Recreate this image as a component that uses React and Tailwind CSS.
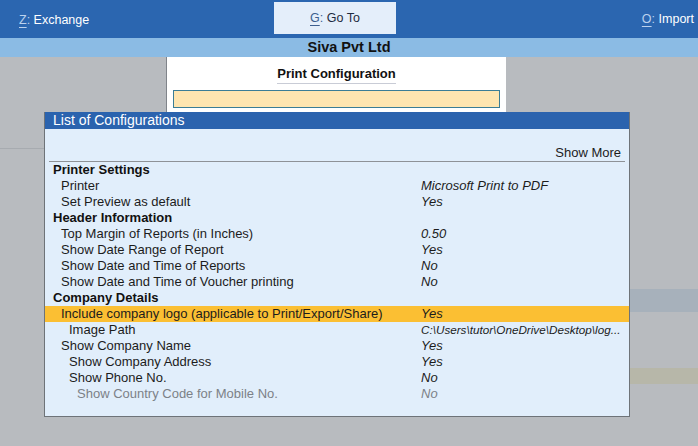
import React from "react";

const rows = [
  { label: "Printer Settings", kind: "head" },
  { label: "Printer", level: 1, value: "Microsoft Print to PDF" },
  { label: "Set Preview as default", level: 1, value: "Yes" },
  { label: "Header Information", kind: "head" },
  { label: "Top Margin of Reports (in Inches)", level: 1, value: "0.50" },
  { label: "Show Date Range of Report", level: 1, value: "Yes" },
  { label: "Show Date and Time of Reports", level: 1, value: "No" },
  { label: "Show Date and Time of Voucher printing", level: 1, value: "No" },
  { label: "Company Details", kind: "head" },
  { label: "Include company logo (applicable to Print/Export/Share)", level: 1, value: "Yes", active: true },
  { label: "Image Path", level: 2, value: "C:\\Users\\tutor\\OneDrive\\Desktop\\log...", small: true },
  { label: "Show Company Name", level: 1, value: "Yes" },
  { label: "Show Company Address", level: 2, value: "Yes" },
  { label: "Show Phone No.", level: 2, value: "No" },
  { label: "Show Country Code for Mobile No.", level: 3, value: "No", muted: true },
];

const indent = { 1: "pl-[16px]", 2: "pl-[24px]", 3: "pl-[32px]" };

const TopKey = ({ k, label, light }) => (
  <span className={`text-[12.5px] ${light ? "text-[#1d2b40]" : "text-white"}`}>
    <span className={`underline underline-offset-[3px] ${light ? "text-[#3d5f8f]" : "text-[#bcd2ee]"}`}>{k}</span>
    <span className={light ? "text-[#3d5f8f]" : "text-[#bcd2ee]"}>:</span> {label}
  </span>
);

const App = () => {
  return (
    <div className="relative w-[698px] h-[446px] overflow-hidden bg-[#b8bbbf] font-['Liberation_Sans',Arial,sans-serif] text-[#1c1c1c]">
      {/* top button bar */}
      <div className="flex items-center h-[38px] bg-[#2b66b0]">
        <div className="w-[274px] pl-[19px]">
          <TopKey k="Z" label="Exchange" />
        </div>
        <div className="w-[122px] h-[32px] mt-[-2px] bg-[#e4eefa] flex items-center pl-[36px]">
          <TopKey k="G" label="Go To" light />
        </div>
        <div className="flex-1 flex justify-end pr-[4px]">
          <TopKey k="O" label="Import" />
        </div>
      </div>

      {/* company bar */}
      <div className="h-[19px] bg-[#8bbbe4] flex items-center justify-center text-[14.5px] font-bold text-[#111]">
        Siva Pvt Ltd
      </div>

      {/* background screen */}
      <div className="flex flex-col">
        <div className="ml-[166px] w-[340px] h-[91px] bg-white border-l border-[#80848a] flex flex-col items-center">
          <div className="mt-[9px] text-[13px] font-bold text-[#111] border-b border-[#c9ccd6] leading-[16px] pb-[1px]">
            Print Configuration
          </div>
          <div className="mt-[6px] w-[327px] h-[18px] bg-[#fee5b0] border border-[#3b7d96]" />
        </div>
        <div className="w-[44px] h-px bg-[#a7abb0]" />
        <div className="h-[140px]" />
        <div className="ml-auto w-[68px] h-[23px] bg-[#a7b1bb]" />
        <div className="h-[56px]" />
        <div className="ml-auto w-[68px] h-[16px] bg-[#b7b7a9]" />
      </div>

      {/* dialog */}
      <div className="absolute left-[44px] top-[112px] w-[586px] h-[305px] bg-[#e1eefb] border border-[#6e7378] border-t-0 flex flex-col">
        <div className="h-[17px] bg-[#2b63ae] text-white text-[14px] leading-[17px] pl-[8px]">
          List of Configurations
        </div>
        <div className="mt-[16px] mx-[4px] h-[16px] flex items-center justify-end pr-[4px] text-[13px] border-b border-[#8e9297] box-content">
          Show More
        </div>
        <div className="flex flex-col">
          {rows.map((r, i) =>
            r.kind === "head" ? (
              <div key={i} className="h-[16px] leading-[16px] pl-[8px] text-[13px] font-bold text-[#111]">
                {r.label}
              </div>
            ) : (
              <div
                key={i}
                className={`h-[16px] leading-[16px] flex text-[13px] ${r.active ? "bg-[#fbbf33]" : ""} ${
                  r.muted ? "text-[#7c8187]" : "text-[#1c1c1c]"
                }`}
              >
                <div className={`w-[376px] pl-[8px] ${indent[r.level]} whitespace-nowrap`}>{r.label}</div>
                <div className={`flex-1 italic whitespace-nowrap overflow-hidden ${r.small ? "text-[11.7px]" : ""}`}>
                  {r.value}
                </div>
              </div>
            )
          )}
        </div>
      </div>
    </div>
  );
};

export default App;
